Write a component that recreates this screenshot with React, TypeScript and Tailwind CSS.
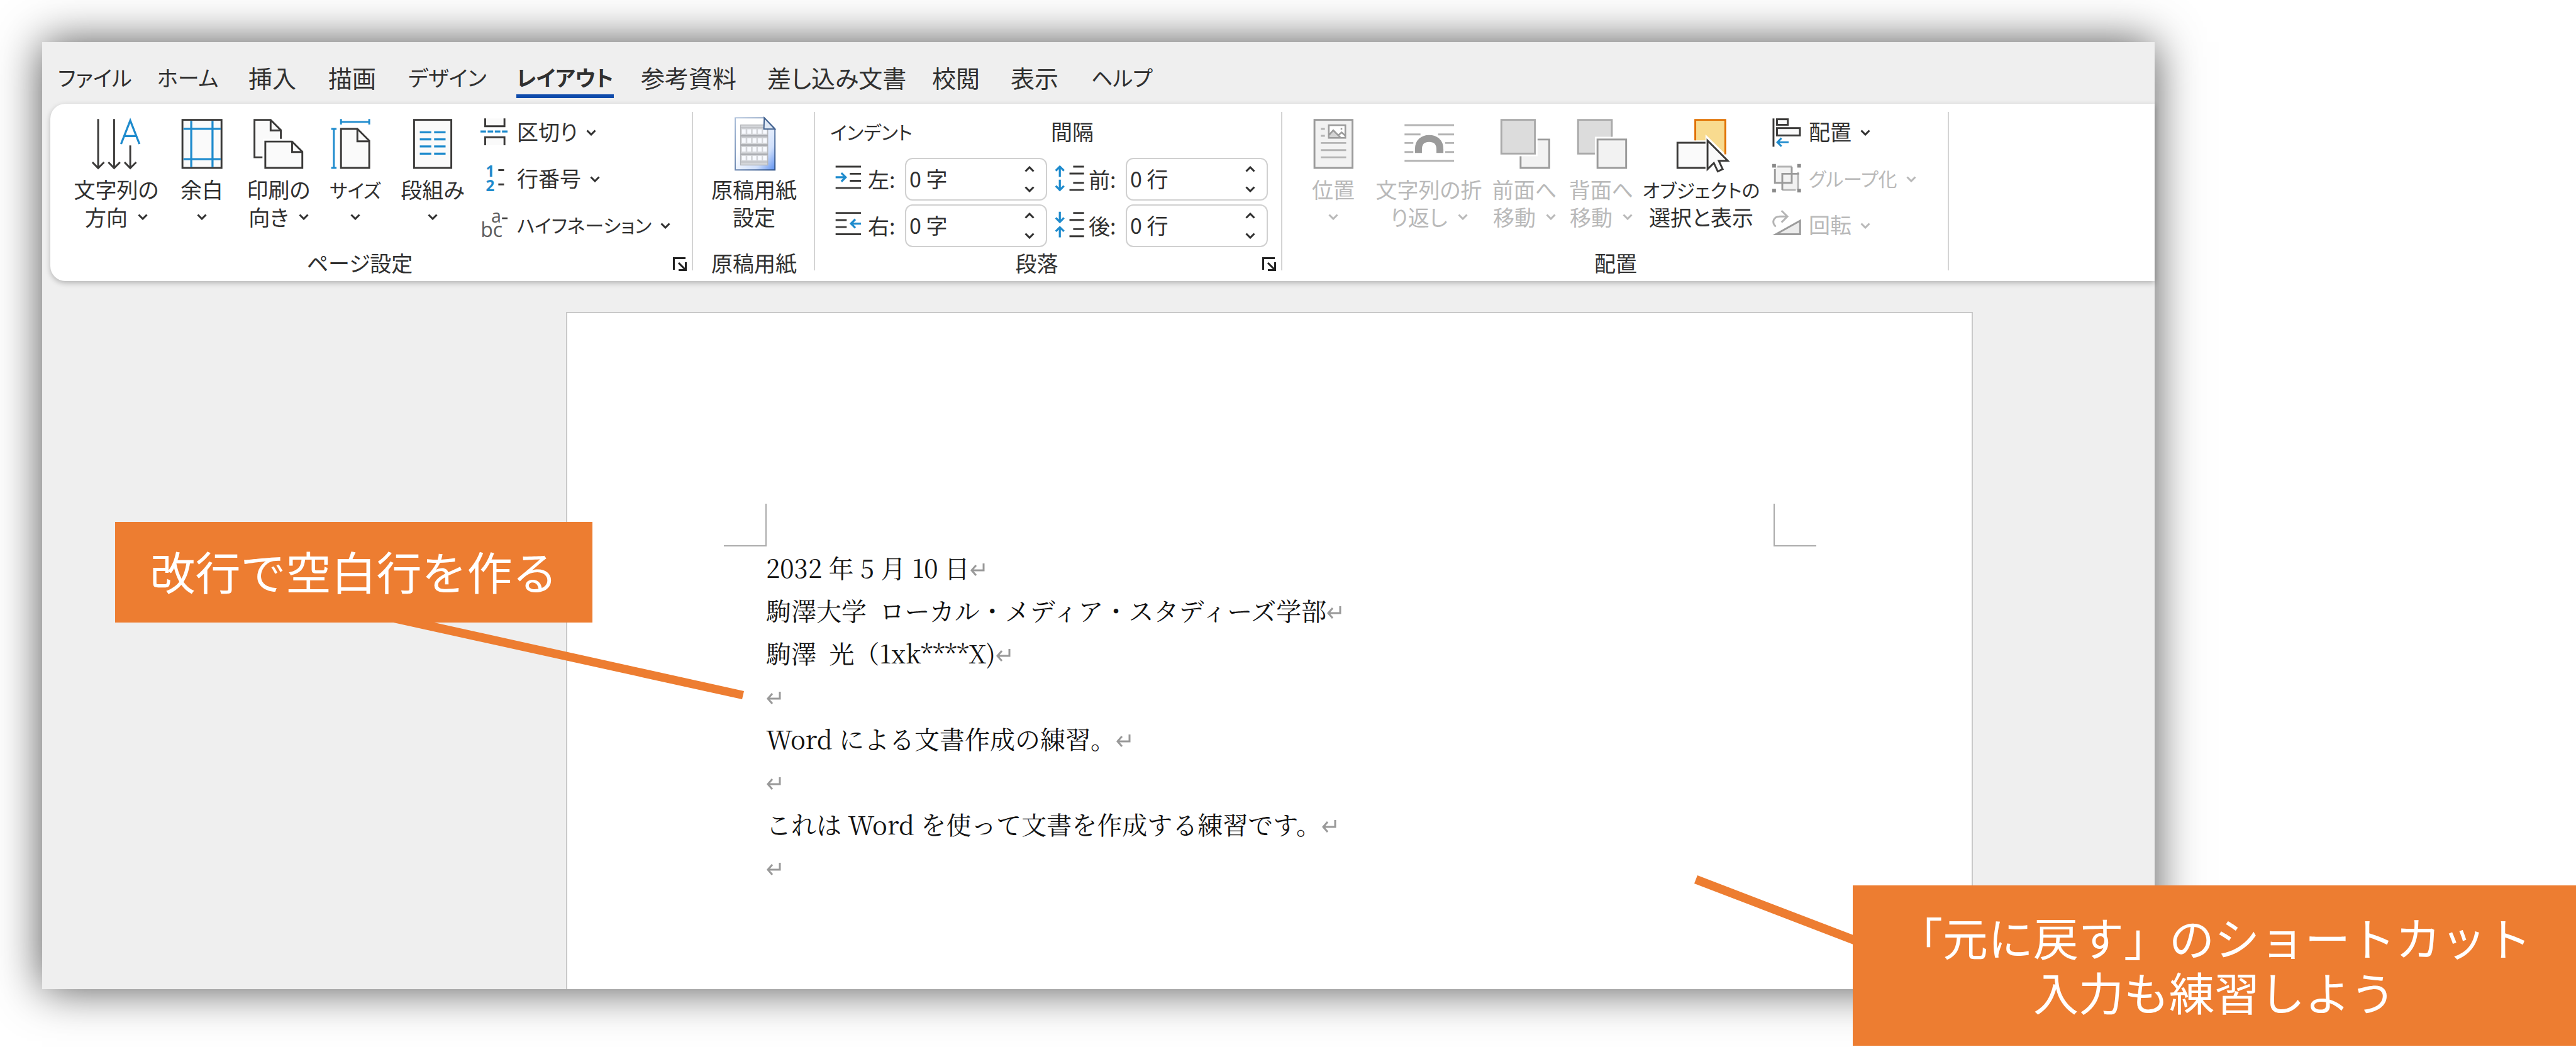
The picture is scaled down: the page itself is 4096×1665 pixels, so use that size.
import React from 'react';

const INK = '#3b3a39';
const BLUE = '#1e8bcd';
const PAPER = '#fafafa';
const GREY = '#9b9b9b';
const GREY_SOFT = '#b4b4b4';

type IconProps = { box: string; children: React.ReactNode };

function BigIcon({ box, children }: IconProps) {
  return (
    <svg viewBox={box} className="h-20 w-20 shrink-0 overflow-visible" fill="none" aria-hidden="true">
      {children}
    </svg>
  );
}

function SmallIcon({ box, children }: IconProps) {
  return (
    <svg viewBox={box} className="h-11 w-11 shrink-0 overflow-visible" fill="none" aria-hidden="true">
      {children}
    </svg>
  );
}

function Chevron({ up = false }: { up?: boolean }) {
  return (
    <svg viewBox="0 0 16 10" className="h-[10px] w-4 shrink-0" fill="none" stroke="currentColor" strokeWidth="3" aria-hidden="true">
      <path d={up ? 'M1.5 8.5 L8 2 L14.5 8.5' : 'M1.5 1.5 L8 8 L14.5 1.5'} />
    </svg>
  );
}

/* ---------- ribbon icons ---------- */

const TextDirectionIcon = (
  <BigIcon box="116 42 246 246">
    <g stroke={INK} strokeWidth="9">
      <path d="M150 43V282M228 43V282M307 172V282" />
      <path d="M122 254L150 283L179 254M200 254L228 283L257 254M279 254L307 283L336 254" />
    </g>
    <path d="M262 165L307 50L352 165M276 126H338" stroke={BLUE} strokeWidth="10" />
  </BigIcon>
);

const MarginsIcon = (
  <BigIcon box="531 42 246 246">
    <rect x="559" y="47" width="191" height="235" fill={PAPER} stroke={INK} strokeWidth="9" />
    <path d="M602 52V278M706 52V278M564 91H746M564 239H746" stroke={BLUE} strokeWidth="10" />
  </BigIcon>
);

const OrientationIcon = (
  <BigIcon box="913 42 246 246">
    <path d="M918 47H997L1047 97V140H960V230H918Z" fill={PAPER} />
    <path d="M957 230H918V47H997L1047 97V140M997 47V99H1047" stroke={INK} strokeWidth="9" />
    <path d="M971 153H1102L1152 203V282H971Z" fill={PAPER} stroke={INK} strokeWidth="9" />
    <path d="M1102 153V204H1152" stroke={INK} strokeWidth="9" />
  </BigIcon>
);

const SizeIcon = (
  <BigIcon box="1285 42 246 246">
    <path d="M1338 91H1418L1476 149V282H1338Z" fill={PAPER} stroke={INK} strokeWidth="9" />
    <path d="M1418 91V152H1476" stroke={INK} strokeWidth="9" />
    <path d="M1338 43V70M1476 43V70M1338 57H1476M1290 91H1316M1290 282H1316M1303 91V282" stroke={BLUE} strokeWidth="9" />
  </BigIcon>
);

const ColumnsIcon = (
  <BigIcon box="105 42 246 246">
    <rect x="137" y="47" width="182" height="235" fill={PAPER} stroke={INK} strokeWidth="9" />
    <path
      d="M165 108H221M235 108H291M165 142H221M235 142H291M165 177H221M235 177H291M165 212H221M235 212H291"
      stroke={BLUE}
      strokeWidth="10"
    />
  </BigIcon>
);

const BreaksIcon = (
  <SmallIcon box="459 40 135 135">
    <path d="M482 38V76H576V38" fill={PAPER} stroke={INK} strokeWidth="9" />
    <path d="M482 169V130H576V169" fill={PAPER} stroke={INK} strokeWidth="9" />
    <path d="M459 102H486M494 102H521M529 102H556M564 102H591" stroke={BLUE} strokeWidth="10" />
  </SmallIcon>
);

const LineNumbersIcon = (
  <SmallIcon box="459 270 135 135">
    <text x="485" y="325" fontSize="74" fontWeight="700" fill={BLUE} className="font-['Open_Sans',sans-serif]">1</text>
    <text x="485" y="395" fontSize="74" fontWeight="700" fill={BLUE} className="font-['Open_Sans',sans-serif]">2</text>
    <path d="M546 293H574M546 363H574" stroke={INK} strokeWidth="9" />
  </SmallIcon>
);

const HyphenationIcon = (
  <SmallIcon box="459 497 135 135">
    <text x="511" y="549" fontSize="88" fill="#5c5c5c" className="font-['Open_Sans',sans-serif]">a</text>
    <text x="460" y="620" fontSize="98" fill="#5c5c5c" className="font-['Open_Sans',sans-serif]">bc</text>
    <path d="M564 528H591" stroke={INK} strokeWidth="8" />
  </SmallIcon>
);

const ManuscriptIcon = (
  <BigIcon box="143 42 246 246">
    <defs>
      <linearGradient id="sheet" x1="0" y1="0" x2="1" y2="1">
        <stop offset="0.35" stopColor="#ffffff" />
        <stop offset="0.75" stopColor="#cfdffb" />
        <stop offset="1" stopColor="#5c8fef" />
      </linearGradient>
      <linearGradient id="sheetEdge" x1="0" y1="0" x2="1" y2="1">
        <stop offset="0" stopColor="#a9bdd8" />
        <stop offset="1" stopColor="#2c4f86" />
      </linearGradient>
    </defs>
    <path d="M174 37H316L368 90V292H174Z" fill="url(#sheet)" stroke="url(#sheetEdge)" strokeWidth="6" />
    <rect x="200" y="72" width="133" height="196" fill="#d3d5d9" stroke="#b3b5b9" strokeWidth="4" />
    {[93, 137, 180, 223].map((y) => (
      <g key={y}>
        {[207, 233, 259, 285, 310].map((x) => (
          <rect key={x} x={x} y={y} width="18" height="22" fill="#f8faff" />
        ))}
        <path d={`M200 ${y - 7}H333M200 ${y + 30}H333`} stroke="#a9abb0" strokeWidth="4" />
      </g>
    ))}
    <path d="M316 37L368 92H314Z" fill="#dfe8f5" stroke="#41618f" strokeWidth="6" />
  </BigIcon>
);

const IndentLeftIcon = (
  <SmallIcon box="669 270 135 135">
    <path d="M668 276H792M737 311H792M737 345H792M668 380H792" stroke={INK} strokeWidth="9" />
    <path d="M668 328H717M696 307L717 328L696 349" stroke={BLUE} strokeWidth="10" />
  </SmallIcon>
);

const IndentRightIcon = (
  <SmallIcon box="669 497 135 135">
    <path d="M668 502H792M668 537H722M668 571H722M668 606H792" stroke={INK} strokeWidth="9" />
    <path d="M792 554H743M764 533L743 554L764 575" stroke={BLUE} strokeWidth="10" />
  </SmallIcon>
);

const SpaceBeforeIcon = (
  <SmallIcon box="129 120 135 135">
    <path d="M210 126H263M192 160H263M210 205H263M192 240H263" stroke={INK} strokeWidth="9" />
    <path d="M145 176V127M125 146L145 126L165 146M145 190V239M125 220L145 240L165 220" stroke={BLUE} strokeWidth="10" />
  </SmallIcon>
);

const SpaceAfterIcon = (
  <SmallIcon box="129 347 135 135">
    <path d="M210 352H263M192 386H263M210 431H263M192 466H263" stroke={INK} strokeWidth="9" />
    <path d="M145 346V395M125 376L145 396L165 376M145 471V422M125 442L145 422L165 442" stroke={BLUE} strokeWidth="10" />
  </SmallIcon>
);

const PositionIcon = (
  <BigIcon box="40 42 246 246">
    <rect x="71" y="47" width="186" height="235" fill="#f2f2f2" stroke={GREY} strokeWidth="9" />
    <path d="M102 91H122M102 125H122M102 160H226M102 195H226M102 230H226" stroke={GREY_SOFT} strokeWidth="9" />
    <rect x="141" y="73" width="81" height="62" fill="#ffffff" stroke={GREY} strokeWidth="8" />
    <path d="M145 120L163 98L196 131H145Z" fill="#d4d4d4" />
    <path d="M143 120L163 98L198 133M188 122L204 108L221 124" stroke={GREY} strokeWidth="8" />
    <rect x="199" y="87" width="8" height="8" fill={GREY} />
  </BigIcon>
);

const WrapTextIcon = (
  <BigIcon box="508 42 246 246">
    <path
      d="M512 73H754M512 118H590M676 118H754M512 160H555M711 160H754M512 204H555M711 204H754M512 247H754"
      stroke={GREY_SOFT}
      strokeWidth="9"
    />
    <path d="M580 209V190C580 155 603 138 632 138C662 138 685 155 685 190V209" stroke={GREY} strokeWidth="34" />
  </BigIcon>
);

const BringForwardIcon = (
  <BigIcon box="975 42 246 246">
    <path d="M1162 143H1219V282H1079V225H1162Z" fill="#f2f2f2" />
    <path d="M1162 143H1219V282H1079V225" stroke={GREY} strokeWidth="9" />
    <rect x="985" y="47" width="164" height="165" fill="#dcdcdc" stroke="#aaaaaa" strokeWidth="9" />
  </BigIcon>
);

const SendBackwardIcon = (
  <BigIcon box="1351 42 246 246">
    <path d="M1361 47H1526V130H1443V212H1361Z" fill="#dcdcdc" />
    <path d="M1526 130V47H1361V212H1443" stroke="#aaaaaa" strokeWidth="9" />
    <rect x="1456" y="143" width="140" height="139" fill="#f2f2f2" stroke={GREY} strokeWidth="9" />
  </BigIcon>
);

const SelectionPaneIcon = (
  <BigIcon box="280 42 246 246">
    <path d="M374 147V47H521V214L424 118V147Z" fill="#f8db8f" />
    <path d="M374 147V47H521V216" stroke="#e07000" strokeWidth="9" />
    <rect x="287" y="159" width="136" height="123" fill={PAPER} />
    <path d="M424 159H287V282H424" stroke={INK} strokeWidth="9" />
    <path
      d="M434 148V288L465 258L484 299L508 288L489 247H533Z"
      fill={PAPER}
      stroke={INK}
      strokeWidth="9"
    />
  </BigIcon>
);

const AlignIcon = (
  <SmallIcon box="751 40 135 135">
    <path d="M757 38V176" stroke={INK} strokeWidth="9" />
    <rect x="774" y="42" width="53" height="27" fill={PAPER} stroke={INK} strokeWidth="9" />
    <rect x="774" y="85" width="112" height="36" fill={PAPER} stroke={INK} strokeWidth="9" />
    <path d="M831 154H776M796 134L776 154L796 174" stroke={BLUE} strokeWidth="9" />
  </SmallIcon>
);

const GroupIcon = (
  <SmallIcon box="751 270 135 135">
    <path d="M764 276H846V355H764ZM800 311H877V390H800Z" fill="#f2f2f2" />
    <path d="M846 276H776M877 303V390M866 390H800" stroke={GREY_SOFT} strokeWidth="9" />
    <path d="M764 288V355H846V276M800 390V311H882" stroke={GREY} strokeWidth="9" />
    <path d="M751 263h18v18h-18zM873 263h18v18h-18zM751 384h18v18h-18zM873 384h18v18h-18z" fill="#8a8a8a" />
  </SmallIcon>
);

const RotateIcon = (
  <SmallIcon box="751 497 135 135">
    <path d="M768 569C744 545 760 519 788 519H824M796 491L825 519L796 548" stroke={GREY_SOFT} strokeWidth="9" />
    <path d="M769 606L887 540V606Z" fill="#ececec" stroke={GREY} strokeWidth="9" />
  </SmallIcon>
);

/* ---------- ribbon pieces ---------- */

type BigButtonProps = {
  icon: React.ReactNode;
  line1: string;
  line2?: string;
  width: string;
  chevron?: boolean;
  disabled?: boolean;
  kana?: boolean;
};

function BigButton({ icon, line1, line2, width, chevron = true, disabled, kana }: BigButtonProps) {
  return (
    <button
      type="button"
      disabled={disabled}
      className={`flex shrink-0 flex-col items-center pt-[15px] whitespace-nowrap disabled:text-[#b9b9b9] ${width}`}
    >
      {icon}
      <span className={kana ? 'mt-[10px] text-[30px] leading-[44px]' : 'mt-[10px] leading-[44px]'}>{line1}</span>
      <span className="flex h-11 items-center gap-4 leading-[44px]">
        {line2}
        {chevron && <Chevron />}
      </span>
    </button>
  );
}

type SmallButtonProps = { icon: React.ReactNode; label: string; disabled?: boolean; kana?: boolean };

function SmallButton({ icon, label, disabled, kana }: SmallButtonProps) {
  return (
    <button type="button" disabled={disabled} className="flex h-[74px] items-center whitespace-nowrap disabled:text-[#b9b9b9]">
      {icon}
      <span className={kana ? 'mr-[14px] ml-[14px] pb-1 text-[30px]' : 'mr-[14px] ml-[14px] pb-1'}>{label}</span>
      <Chevron />
    </button>
  );
}

function Spin({ id, icon, label, value }: { id: string; icon: React.ReactNode; label: string; value: string }) {
  return (
    <div className="flex h-[74px] items-center pl-[9px]">
      {icon}
      <label htmlFor={id} className="ml-[7px] w-[59px] whitespace-nowrap">
        {label}
      </label>
      <div className="flex h-[68px] w-[226px] items-center rounded-xl border-2 border-[#d0d0d0] bg-white">
        <input id={id} type="text" defaultValue={value} className="h-full w-full min-w-0 flex-1 bg-transparent pb-1 pl-[5px] outline-none" />
        <div className="flex w-[52px] flex-col items-center">
          <button type="button" aria-label={`${label} 増やす`} className="flex h-8 w-full items-center justify-center">
            <Chevron up />
          </button>
          <button type="button" aria-label={`${label} 減らす`} className="flex h-8 w-full items-center justify-center">
            <Chevron />
          </button>
        </div>
      </div>
    </div>
  );
}

type GroupProps = { label: string; width: string; launcher?: boolean; children: React.ReactNode };

function Group({ label, width, launcher = false, children }: GroupProps) {
  return (
    <section aria-label={label} className={`relative flex shrink-0 flex-col pt-[9px] ${width}`}>
      <div className="flex h-[222px]">{children}</div>
      <div className="flex h-12 items-center">
        <span className="flex-1 pb-1 text-center whitespace-nowrap">{label}</span>
        {launcher && (
          <button type="button" aria-label={`${label}の詳細`} className="flex w-[38px] justify-start pl-[6px]">
            <svg viewBox="0 0 22 22" className="h-[22px] w-[22px]" fill="none" stroke="#222222" strokeWidth="3" aria-hidden="true">
              <path d="M1.5 20V1.5H20M9 9L20 20M20.5 8V20.5H9" />
            </svg>
          </button>
        )}
      </div>
      <div className="absolute top-[13px] right-0 h-[252px] w-[2px] bg-[#d4d4d4]" />
    </section>
  );
}

const tabs: { label: string; width: string; active?: boolean }[] = [
  { label: 'ファイル', width: 'w-[158px] text-[34px]' },
  { label: 'ホーム', width: 'w-[145px] text-[34px]' },
  { label: '挿入', width: 'w-[127px]' },
  { label: '描画', width: 'w-[127px]' },
  { label: 'デザイン', width: 'w-[172px] text-[34px]' },
  { label: 'レイアウト', width: 'w-[198px] text-[34px]', active: true },
  { label: '参考資料', width: 'w-[201px]' },
  { label: '差し込み文書', width: 'w-[262px]' },
  { label: '校閲', width: 'w-[125px]' },
  { label: '表示', width: 'w-[128px]' },
  { label: 'ヘルプ', width: 'w-[120px] text-[34px]' },
];

function ReturnMark() {
  return (
    <svg viewBox="0 0 24 22" className="inline-block h-[22px] w-6 align-[2px]" fill="none" stroke="#999999" strokeWidth="3" aria-hidden="true">
      <path d="M22 1V12H3M10 4L3 12L10 20" />
    </svg>
  );
}

const lines = [
  '2032 年 5 月 10 日',
  '駒澤大学  ローカル・メディア・スタディーズ学部',
  '駒澤  光（1xk****X)',
  '',
  'Word による文書作成の練習。',
  '',
  'これは Word を使って文書を作成する練習です。',
  '',
];

export default function App() {
  return (
    <div
      lang="ja"
      className="relative flex min-h-screen flex-col overflow-hidden bg-white font-['Noto_Sans_CJK_JP',sans-serif] text-[34px] leading-[44px] font-normal text-[#303030]"
    >
      <main className="mt-[67px] mr-[670px] mb-[92px] ml-[67px] flex flex-1 flex-col bg-[#efefef] shadow-[0_0_68px_rgba(0,0,0,0.68)]">
        <nav className="flex h-[98px] pl-[25px] text-[38px] [font-feature-settings:'palt']">
          {tabs.map((tab) => (
            <div key={tab.label} className={`shrink-0 pt-[32px] ${tab.width}`}>
              <button
                type="button"
                className={
                  tab.active
                    ? 'flex h-[57px] border-b-[6px] border-[#0f4bab] leading-[48px] font-bold whitespace-nowrap'
                    : 'flex h-[57px] leading-[48px] whitespace-nowrap'
                }
              >
                {tab.label}
              </button>
            </div>
          ))}
        </nav>

        <div className="ml-[13px] flex h-[282px] rounded-l-3xl bg-white shadow-[0_3px_8px_rgba(0,0,0,0.25)] [font-feature-settings:'palt']">
          <Group label="ページ設定" width="w-[1022px]" launcher>
            <div className="w-[38px] shrink-0" />
            <BigButton icon={TextDirectionIcon} line1="文字列の" line2="方向" width="w-[134px]" />
            <BigButton icon={MarginsIcon} line1="余白" width="w-[138px]" />
            <BigButton icon={OrientationIcon} line1="印刷の" line2="向き" width="w-[106px]" />
            <BigButton icon={SizeIcon} line1="サイズ" width="w-[138px]" kana />
            <BigButton icon={ColumnsIcon} line1="段組み" width="w-[108px]" />
            <div className="ml-[22px] flex flex-col">
              <SmallButton icon={BreaksIcon} label="区切り" />
              <SmallButton icon={LineNumbersIcon} label="行番号" />
              <SmallButton icon={HyphenationIcon} label="ハイフネーション" kana />
            </div>
          </Group>

          <Group label="原稿用紙" width="w-[194px]">
            <BigButton icon={ManuscriptIcon} line1="原稿用紙" line2="設定" width="w-full" chevron={false} />
          </Group>

          <Group label="段落" width="w-[743px]" launcher>
            <div className="ml-[24px] flex w-[345px] flex-col">
              <div className="h-[74px] text-[30px] leading-[70px]">インデント</div>
              <Spin id="indent-left" icon={IndentLeftIcon} label="左:" value="0 字" />
              <Spin id="indent-right" icon={IndentRightIcon} label="右:" value="0 字" />
            </div>
            <div className="ml-[6px] flex w-[345px] flex-col">
              <div className="h-[74px] leading-[70px]">間隔</div>
              <Spin id="space-before" icon={SpaceBeforeIcon} label="前:" value="0 行" />
              <Spin id="space-after" icon={SpaceAfterIcon} label="後:" value="0 行" />
            </div>
          </Group>

          <Group label="配置" width="w-[1060px]">
            <div className="w-[31px] shrink-0" />
            <BigButton icon={PositionIcon} line1="位置" width="w-[100px]" disabled />
            <BigButton icon={WrapTextIcon} line1="文字列の折" line2="り返し" width="w-[204px]" disabled />
            <BigButton icon={BringForwardIcon} line1="前面へ" line2="移動" width="w-[100px]" disabled />
            <BigButton icon={SendBackwardIcon} line1="背面へ" line2="移動" width="w-[144px]" disabled />
            <BigButton icon={SelectionPaneIcon} line1="オブジェクトの" line2="選択と表示" width="w-[174px]" chevron={false} kana />
            <div className="ml-[26px] flex flex-col">
              <SmallButton icon={AlignIcon} label="配置" />
              <SmallButton icon={GroupIcon} label="グループ化" disabled kana />
              <SmallButton icon={RotateIcon} label="回転" disabled />
            </div>
          </Group>
        </div>

        <article className="mt-[49px] mr-[289px] ml-[833px] flex-1 border-x-2 border-t-2 border-[#c9c9c9] bg-white pt-[303px]">
          <div className="mr-[247px] ml-[249px] flex justify-between">
            <div className="h-[68px] w-[68px] border-r-2 border-b-2 border-[#ababab]" />
            <div className="h-[68px] w-[68px] border-b-2 border-l-2 border-[#ababab]" />
          </div>
          <div className="ml-[316px] font-['Noto_Serif_CJK_JP','Liberation_Serif','Noto_Sans_CJK_JP',serif] text-[40px] text-[#111111]">
            {lines.map((line, index) => (
              <p key={index} className="h-[68px] leading-[66px] whitespace-pre">
                {line}
                <ReturnMark />
              </p>
            ))}
          </div>
        </article>
      </main>

      <aside className="absolute top-[830px] left-[183px] flex h-40 w-[759px] items-center justify-center bg-[#ed7d31] pb-2 text-[72px] leading-[87px] whitespace-nowrap text-white">
        改行で空白行を作る
        <svg viewBox="621 989 562 123" className="absolute top-[159px] left-[438px] h-[123px] w-[562px]" aria-hidden="true">
          <path d="M621 989H686L1183 1099L1180 1112Z" fill="#ed7d31" />
        </svg>
      </aside>

      <aside className="absolute right-0 bottom-[2px] flex h-[255px] w-[1150px] items-center justify-center bg-[#ed7d31] pb-2 text-[72px] leading-[87px] whitespace-nowrap text-white">
        <p className="text-center">
          「元に戻す」のショートカット
          <br />
          入力も練習しよう
        </p>
        <svg viewBox="2694 1392 253 110" className="absolute top-[-16px] left-[-252px] h-[110px] w-[253px]" aria-hidden="true">
          <path d="M2699 1392L2947 1487V1502L2694 1405Z" fill="#ed7d31" />
        </svg>
      </aside>
    </div>
  );
}
